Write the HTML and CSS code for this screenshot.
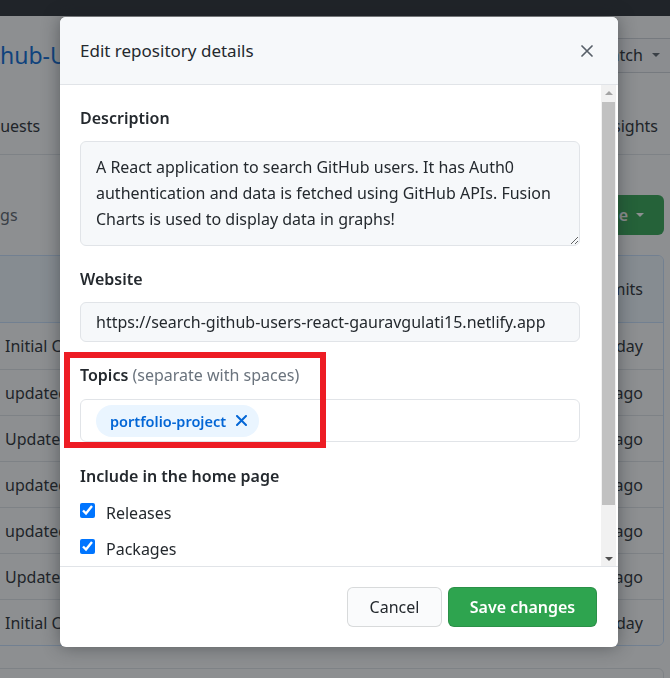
FILE: index.html
```html
<!DOCTYPE html>
<html lang="en">
<head>
<meta charset="utf-8">
<title>Edit repository details</title>
<link rel="stylesheet" href="styles.css">
</head>
<body>
<div class="page">
  <div class="topbar"></div>
  <div class="titlerow">
    <span class="reponame">Github-Users-Search</span>
    <span class="watch">Watch<span class="caret"></span></span>
  </div>
  <div class="tabs">
    <span class="tab-left">Pull requests</span>
    <span class="tab-right">Insights</span>
  </div>
  <div class="branchrow">
    <span class="tags">5 tags</span>
    <span class="codebtn">Code<span class="caret"></span></span>
  </div>
  <div class="commits">
    <div class="commits-head"><span>13 commits</span></div>
    <div class="commit"><span>Initial Commit</span><span>yesterday</span></div>
    <div class="commit"><span>updated</span><span>2 days ago</span></div>
    <div class="commit"><span>Updated README</span><span>2 days ago</span></div>
    <div class="commit"><span>updated</span><span>3 days ago</span></div>
    <div class="commit"><span>updated</span><span>3 days ago</span></div>
    <div class="commit"><span>Updated</span><span>4 days ago</span></div>
    <div class="commit"><span>Initial Commit</span><span>yesterday</span></div>
  </div>
  <div class="nextbox"></div>
</div>

<div class="overlay"></div>

<div class="modal" role="dialog" aria-label="Edit repository details">
  <div class="modal-header">
    <h1 class="modal-title">Edit repository details</h1>
    <button class="close" aria-label="Close">
      <svg width="12" height="12" viewBox="0 0 12 12"><path d="M1 1L11 11M11 1L1 11" stroke="#586069" stroke-width="1.7" stroke-linecap="round"/></svg>
    </button>
  </div>
  <div class="modal-body">
    <div class="body-content">
      <div class="field">
        <label class="field-label" for="desc">Description</label>
        <textarea id="desc" class="textarea">A React application to search GitHub users. It has Auth0 authentication and data is fetched using GitHub APIs. Fusion Charts is used to display data in graphs!</textarea>
      </div>
      <div class="field">
        <label class="field-label" for="site">Website</label>
        <input id="site" class="input" type="text" value="https://search-github-users-react-gauravgulati15.netlify.app">
      </div>
      <div class="field field-topics">
        <div class="field-label">Topics <span class="hint">(separate with spaces)</span></div>
        <div class="topics-input">
          <span class="topic">portfolio-project
            <svg class="topic-x" width="11" height="11" viewBox="0 0 11 11"><path d="M1 1L10 10M10 1L1 10" stroke="#0366d6" stroke-width="2" stroke-linecap="round"/></svg>
          </span>
        </div>
      </div>
      <div class="field">
        <div class="field-label">Include in the home page</div>
        <label class="check first"><input type="checkbox" checked><span>Releases</span></label>
        <label class="check"><input type="checkbox" checked><span>Packages</span></label>
      </div>
    </div>
    <div class="scrollbar">
      <span class="sb-btn"><span class="arrow-up"></span></span>
      <span class="sb-thumb"></span>
      <span class="sb-track"></span>
      <span class="sb-btn"><span class="arrow-down"></span></span>
    </div>
  </div>
  <div class="modal-footer">
    <button class="btn btn-cancel">Cancel</button>
    <button class="btn btn-save">Save changes</button>
  </div>
</div>

<div class="annotation"></div>
</body>
</html>
```

FILE: styles.css
```css
* { box-sizing: border-box; }
html, body { margin: 0; padding: 0; }
body {
  width: 670px;
  height: 678px;
  overflow: hidden;
  position: relative;
  background: #fff;
  color: #24292e;
  font-family: "Noto Sans", "Open Sans", sans-serif;
  font-size: 16px;
}

/* ---------- background page ---------- */
.page { display: flex; flex-direction: column; }
.topbar { height: 16px; background: #24292e; flex: none; }
.titlerow {
  height: 78px;
  display: flex;
  align-items: center;
  justify-content: space-between;
}
.reponame {
  font-size: 23px;
  line-height: 30px;
  color: #0366d6;
  margin-left: -31px;
  white-space: nowrap;
}
.watch {
  display: flex;
  align-items: center;
  height: 35px;
  width: 150px;
  margin-right: -65px;
  padding-left: 10px;
  border: 1px solid #d1d5da;
  border-radius: 6px;
  background: #fafbfc;
  flex: none;
}
.caret {
  display: inline-block;
  width: 0;
  height: 0;
  border-left: 4px solid transparent;
  border-right: 4px solid transparent;
  border-top: 4px solid currentColor;
}
.watch .caret { margin-left: 9px; color: #586069; }
.tabs {
  height: 61px;
  padding-top: 4px;
  display: flex;
  align-items: center;
  justify-content: space-between;
  border-bottom: 1px solid #e1e4e8;
}
.tab-left { margin-left: -57px; color: #24292e; white-space: nowrap; }
.tab-right { margin-right: 12px; color: #24292e; }
.branchrow {
  height: 100px;
  padding-top: 40px;
  display: flex;
  align-items: flex-start;
  justify-content: space-between;
  margin-right: 6px;
}
.tags { margin-left: -28px; line-height: 40px; color: #586069; white-space: nowrap; }
.codebtn {
  height: 40px;
  display: flex;
  align-items: center;
  padding: 0 20px 0 16px;
  background: #2ea44f;
  color: #fff;
  font-weight: 600;
  border-radius: 6px;
}
.codebtn .caret { margin-left: 8px; }
.commits {
  margin: 0 6px 0 -12px;
  border: 1px solid #c8e1ff;
  border-radius: 6px;
  overflow: hidden;
}
.commits-head {
  height: 67px;
  background: #f1f8ff;
  border-bottom: 1px solid #c8e1ff;
  display: flex;
  align-items: center;
  justify-content: flex-end;
  padding-right: 20px;
}
.commit {
  height: 46px;
  display: flex;
  align-items: center;
  justify-content: space-between;
  padding: 0 20px 0 16px;
  background: #fff;
}
.commit + .commit { border-top: 1px solid #e1e4e8; }
.nextbox {
  margin: 22px 6px 0 -12px;
  height: 40px;
  border: 1px solid #e1e4e8;
  border-radius: 6px;
}

/* ---------- overlay + modal ---------- */
.overlay {
  position: fixed;
  inset: 0;
  background: rgba(27, 31, 35, 0.5);
}
.modal {
  position: absolute;
  left: 60px;
  top: 17px;
  width: 558px;
  height: 630px;
  background: #fff;
  border-radius: 6px;
  box-shadow: 0 0 18px rgba(27, 31, 35, 0.45);
  display: flex;
  flex-direction: column;
  overflow: hidden;
}
.modal-header {
  height: 68px;
  flex: none;
  background: #f6f8fa;
  border-bottom: 1px solid #e1e4e8;
  display: flex;
  align-items: center;
  justify-content: space-between;
  padding: 1px 25px 0 20px;
}
.modal-title {
  margin: 0;
  font-size: 17px;
  font-weight: 400;
  line-height: 24px;
  color: #24292e;
}
.close {
  width: 12px;
  height: 12px;
  padding: 0;
  border: 0;
  background: none;
  display: flex;
}
.modal-body {
  flex: 1;
  min-height: 0;
  display: flex;
}
.body-content {
  flex: 1;
  min-width: 0;
  overflow: hidden;
  padding: 21px 21px 0 20px;
}
.field { margin-bottom: 21px; }
.field-topics { margin-bottom: 22px; }
.field-label {
  display: block;
  font-weight: 600;
  line-height: 24px;
  margin-bottom: 11px;
}
.field-topics .field-label { margin-bottom: 12px; }
.hint { font-weight: 400; color: #6a737d; }
.textarea {
  display: block;
  width: 100%;
  height: 105px;
  padding: 12px 15px;
  font: inherit;
  line-height: 26px;
  color: #24292e;
  background: #f6f8fa;
  border: 1px solid #e1e4e8;
  border-radius: 6px;
  resize: vertical;
  overflow: hidden;
}
.input {
  display: block;
  width: 100%;
  height: 40px;
  padding: 0 15px;
  font: inherit;
  color: #24292e;
  background: #f6f8fa;
  border: 1px solid #e1e4e8;
  border-radius: 6px;
}
.topics-input {
  height: 43px;
  display: flex;
  align-items: center;
  padding: 0 15px;
  border: 1px solid #e1e4e8;
  border-radius: 6px;
  background: #fff;
}
.topic {
  display: inline-flex;
  align-items: center;
  height: 32px;
  padding: 0 12px 0 14px;
  border-radius: 16px;
  background: #eaf5ff;
  color: #0366d6;
  font-size: 14.5px;
  font-weight: 600;
  white-space: nowrap;
}
.topic-x { margin-left: 10px; }
.check {
  display: flex;
  align-items: flex-start;
  height: 24px;
  line-height: 24px;
  margin-top: 12px;
}
.check.first { margin-top: 13px; }
.check input {
  width: 15px;
  height: 15px;
  margin: 2px 11px 0 0;
  accent-color: #0075ff;
}
.scrollbar {
  width: 15px;
  flex: none;
  margin-right: 2px;
  background: #f1f1f1;
  display: flex;
  flex-direction: column;
}
.sb-btn {
  height: 15px;
  flex: none;
  display: flex;
  align-items: center;
  justify-content: center;
}
.arrow-up {
  width: 0; height: 0;
  border-left: 4px solid transparent;
  border-right: 4px solid transparent;
  border-bottom: 4px solid #a3a3a3;
}
.arrow-down {
  width: 0; height: 0;
  border-left: 4px solid transparent;
  border-right: 4px solid transparent;
  border-top: 4px solid #505050;
}
.sb-thumb {
  height: 403px;
  margin: 2px 1px 0;
  background: #c1c1c1;
  flex: none;
}
.sb-track { flex: 1; }
.modal-footer {
  height: 81px;
  flex: none;
  border-top: 1px solid #e1e4e8;
  display: flex;
  align-items: center;
  justify-content: flex-end;
  gap: 6px;
  padding: 0 21px 0 20px;
}
.btn {
  height: 40px;
  border-radius: 6px;
  border: 1px solid rgba(27, 31, 35, 0.15);
  font: inherit;
  padding: 0;
  text-align: center;
}
.btn-cancel { width: 95px; background: #fafbfc; color: #24292e; }
.btn-save { width: 149px; background: #2ea44f; color: #fff; font-weight: 600; }

/* annotation drawn over the screenshot */
.annotation {
  position: absolute;
  left: 64px;
  top: 352px;
  width: 262px;
  height: 96px;
  border: 6px solid #ed1c24;
}
```
